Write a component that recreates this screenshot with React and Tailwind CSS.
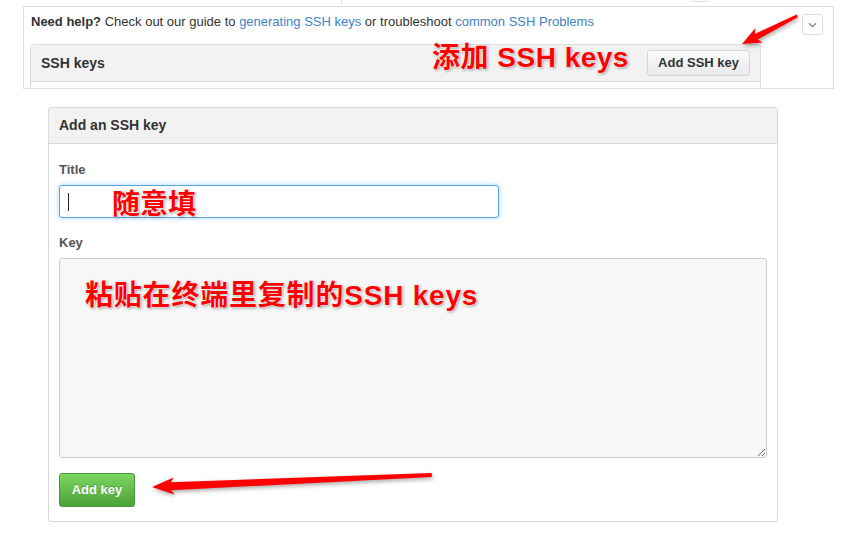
import React from "react";

const annot =
  "absolute font-bold text-[#ff0000] leading-none whitespace-nowrap [font-family:'Liberation_Sans','Noto_Sans_CJK_SC',sans-serif] [text-shadow:0_0_1px_#fff,0_0_2px_#fff,0_0_2px_#fff,1px_1px_3px_rgba(0,0,0,0.5)]";

function arrowPoints(L, H, hw, sw1, sw2) {
  return [
    [0, 0],
    [H + 3, -hw],
    [H, -sw1],
    [L, -sw2],
    [L, sw2],
    [H, sw1],
    [H + 3, hw],
  ]
    .map((p) => p.join(","))
    .join(" ");
}

function Arrows() {
  return (
    <svg
      className="absolute left-0 top-0 pointer-events-none [filter:drop-shadow(1px_2px_2px_rgba(0,0,0,0.35))]"
      width="859"
      height="541"
    >
      <g transform="translate(742,44) rotate(-27)">
        <polygon points={arrowPoints(62, 16, 8, 3.2, 1.5)} fill="#ff0000" />
      </g>
      <g transform="translate(152,487) rotate(-2.46)">
        <polygon points={arrowPoints(280, 19, 8.5, 4, 2)} fill="#ff0000" />
      </g>
    </svg>
  );
}

export default function App() {
  return (
    <div className="relative w-[859px] h-[541px] bg-white overflow-hidden text-[#333] [font-family:'Liberation_Sans',Arial,sans-serif]">
      {/* top strip remnants */}
      <div className="relative h-[6px]">
        <div className="absolute left-[341px] top-0 w-px h-[4px] bg-[#ddd]" />
        <div className="absolute left-[692px] top-[-4px] w-[16px] h-[6px] border border-[#ddd] rounded-[3px]" />
      </div>

      {/* top panel */}
      <div className="ml-[23px] w-[811px] h-[83px] border border-[#ddd] overflow-hidden">
        <div className="flex items-start justify-between pl-[7px] pr-[10px]">
          <p className="text-[13px] leading-[16px] pt-[7px]">
            <b className="font-bold">Need help?</b> Check out our guide to{" "}
            <span className="text-[#4183c4]">generating SSH keys</span> or troubleshoot{" "}
            <span className="text-[#4183c4]">common SSH Problems</span>
          </p>
          <div className="mt-[7px] w-[21px] h-[21px] border border-[#ddd] rounded-[3px] flex items-center justify-center bg-white">
            <svg width="9" height="6" viewBox="0 0 9 6">
              <path d="M1 1.2 L4.5 4.5 L8 1.2" fill="none" stroke="#888" strokeWidth="1.3" />
            </svg>
          </div>
        </div>
        <div className="ml-[6px] mt-[9px] w-[731px] border border-[#ddd] rounded-t-[3px]">
          <div className="h-[37px] bg-[#f2f2f2] border-b border-[#ddd] flex items-center justify-between pl-[10px] pr-[10px]">
            <span className="text-[14px] font-bold">SSH keys</span>
            <div className="h-[26px] px-[10px] flex items-center border border-[#d5d5d5] rounded-[3px] bg-linear-to-b from-[#fafafa] to-[#eaeaea] text-[13px] font-bold text-[#333]">
              Add SSH key
            </div>
          </div>
          <div className="h-[20px] bg-white" />
        </div>
      </div>

      {/* Add an SSH key panel */}
      <div className="ml-[48px] mt-[18px] w-[730px] border border-[#d8d8d8] rounded-[3px] bg-white">
        <div className="h-[36px] bg-[#f2f2f2] border-b border-[#d8d8d8] flex items-center px-[10px] rounded-t-[3px]">
          <span className="text-[14px] font-bold">Add an SSH key</span>
        </div>
        <div className="px-[10px] pt-[18px] pb-[14px] flex flex-col">
          <label className="text-[13px] leading-[16px] font-bold text-[#555]">Title</label>
          <div className="mt-[7px] relative w-[440px] h-[33px] border border-[#51a7e8] rounded-[3px] bg-white shadow-[0_0_5px_rgba(81,167,232,0.5)]">
            <div className="absolute left-[8px] top-[7px] w-px h-[18px] bg-[#222]" />
          </div>
          <label className="mt-[17px] text-[13px] leading-[16px] font-bold text-[#555]">Key</label>
          <textarea
            readOnly
            className="mt-[7px] w-[708px] h-[200px] border border-[#ccc] rounded-[3px] bg-[#f7f7f7] outline-none"
          />
          <div className="mt-[15px] w-[76px] h-[34px] flex items-center justify-center rounded-[3px] border border-[#4a9a3a] bg-linear-to-b from-[#7dd660] to-[#4ba339] text-white text-[13px] font-bold [text-shadow:0_-1px_0_rgba(0,0,0,0.25)]">
            Add key
          </div>
        </div>
      </div>

      {/* annotations */}
      <div className={annot + " left-[432px] top-[44px] text-[28px] tracking-[0.5px]"}>添加 SSH keys</div>
      <div className={annot + " left-[112px] top-[191px] text-[28px]"}>随意填</div>
      <div className={annot + " left-[85px] top-[282px] text-[28px] tracking-[0.8px]"}>
        粘贴在终端里复制的SSH keys
      </div>
      <Arrows />
    </div>
  );
}
